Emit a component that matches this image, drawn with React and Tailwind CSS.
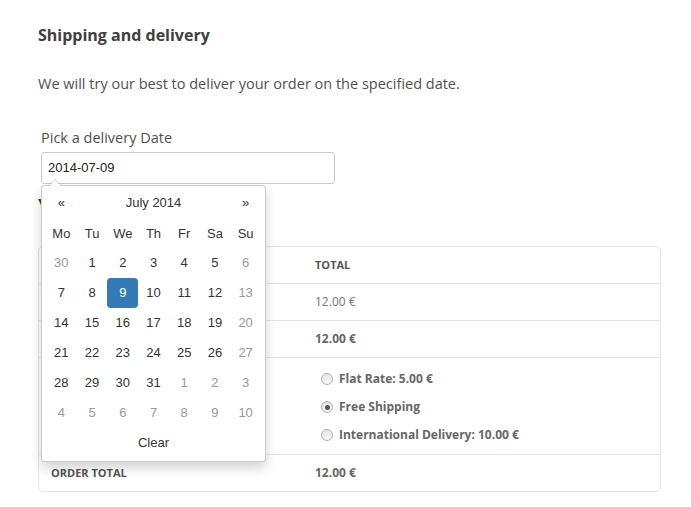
import React from 'react'

const weeks = [
  [[30, 1], [1], [2], [3], [4], [5], [6, 1]],
  [[7], [8], [9, 2], [10], [11], [12], [13, 1]],
  [[14], [15], [16], [17], [18], [19], [20, 1]],
  [[21], [22], [23], [24], [25], [26], [27, 1]],
  [[28], [29], [30], [31], [1, 1], [2, 1], [3, 1]],
  [[4, 1], [5, 1], [6, 1], [7, 1], [8, 1], [9, 1], [10, 1]],
]

const days = ['Mo', 'Tu', 'We', 'Th', 'Fr', 'Sa', 'Su']

function DayCell({ day }) {
  const [n, kind] = day
  if (kind === 2) {
    return (
      <div className="h-[30px] flex items-center justify-center">
        <span className="w-[31px] h-[30px] flex items-center justify-center rounded-[4px] bg-[#337ab7] text-white">
          {n}
        </span>
      </div>
    )
  }
  return (
    <div className={`h-[30px] flex items-center justify-center ${kind === 1 ? 'text-[#999]' : 'text-[#333]'}`}>
      {n}
    </div>
  )
}

function Datepicker() {
  return (
    <div className="absolute left-0 top-[33px] z-10 w-[225px] rounded-[4px] border border-black/20 bg-white px-[4px] pt-[4px] pb-[4px] shadow-[0_6px_12px_rgba(0,0,0,0.175)] font-['Liberation_Sans',Arial,sans-serif] text-[13px] text-[#333]">
      <div className="absolute left-[6px] -top-[7px] h-0 w-0 border-x-[7px] border-b-[7px] border-x-transparent border-b-black/20" />
      <div className="absolute left-[7px] -top-[6px] h-0 w-0 border-x-[6px] border-b-[6px] border-x-transparent border-b-white" />
      <div className="grid grid-cols-7 h-[29px] pb-[4px] items-center text-center">
        <span>«</span>
        <span className="col-span-5">July 2014</span>
        <span>»</span>
      </div>
      <div className="grid grid-cols-7 text-center">
        {days.map((d) => (
          <div key={d} className="h-[30px] flex items-center justify-center">{d}</div>
        ))}
      </div>
      <div className="-mt-px">
        {weeks.map((w, i) => (
          <div key={i} className="grid grid-cols-7">
            {w.map((d, j) => (
              <DayCell key={j} day={d} />
            ))}
          </div>
        ))}
      </div>
      <div className="h-[29px] flex items-center justify-center">Clear</div>
    </div>
  )
}

function Radio({ checked, label }) {
  return (
    <label className="flex items-center h-[28px] gap-[6px]">
      <span className="w-[12px] h-[12px] rounded-full border border-[#b0b0b0] bg-gradient-to-b from-[#e4e4e4] to-[#f8f8f8] flex items-center justify-center">
        {checked && <span className="w-[5px] h-[5px] rounded-full bg-[#555]" />}
      </span>
      <span>{label}</span>
    </label>
  )
}

function OrderTable() {
  const row = 'flex border-t border-[#e5e5e5]'
  const left = 'w-[264px] pl-[12px] flex items-center'
  const right = 'flex-1 pl-[12px] flex items-center'
  return (
    <div className="mt-[29px] rounded-[5px] border border-[#e5e5e5] text-[12px] text-[#666]">
      <div className="flex h-[36px] font-bold uppercase text-[11px] text-[#555]">
        <div className={left} />
        <div className={right}>Total</div>
      </div>
      <div className={`${row} h-[37px]`}>
        <div className={left} />
        <div className={`${right} text-[#777]`}>12.00 €</div>
      </div>
      <div className={`${row} h-[37px] font-bold`}>
        <div className={left} />
        <div className={right}>12.00 €</div>
      </div>
      <div className={`${row} h-[97px] font-bold`}>
        <div className={left} />
        <div className="flex-1 pl-[18px] pt-[2px] flex flex-col justify-center">
          <Radio label="Flat Rate: 5.00 €" />
          <Radio checked label="Free Shipping" />
          <Radio label="International Delivery: 10.00 €" />
        </div>
      </div>
      <div className={`${row} h-[37px] font-bold`}>
        <div className={`${left} uppercase text-[11px] text-[#555]`}>Order Total</div>
        <div className={right}>12.00 €</div>
      </div>
    </div>
  )
}

export default function App() {
  return (
    <div className="min-h-[507px] bg-white px-[38px] pt-[23px] font-['Open_Sans',sans-serif] text-[#555]">
      <div className="w-[623px]">
        <h2 className="h-[24px] leading-[24px] text-[16px] font-bold text-[#404040]">Shipping and delivery</h2>
        <p className="mt-[25px] h-[24px] leading-[24px] text-[14.5px] text-[#515151]">
          We will try our best to deliver your order on the specified date.
        </p>
        <div className="mt-[30px] pl-[3px]">
          <div className="h-[24px] leading-[24px] text-[14.5px] text-[#515151]">Pick a delivery Date</div>
          <div className="relative mt-[2px] w-[294px]">
            <div className="h-[32px] rounded-[3px] border border-[#ccc] px-[6px] flex items-center font-['Liberation_Sans',Arial,sans-serif] text-[13px] text-[#222]">
              2014-07-09
            </div>
            <Datepicker />
          </div>
        </div>
        <h3 className="mt-[9px] h-[24px] leading-[24px] text-[16px] font-bold text-[#404040]">Your order</h3>
        <OrderTable />
      </div>
    </div>
  )
}
